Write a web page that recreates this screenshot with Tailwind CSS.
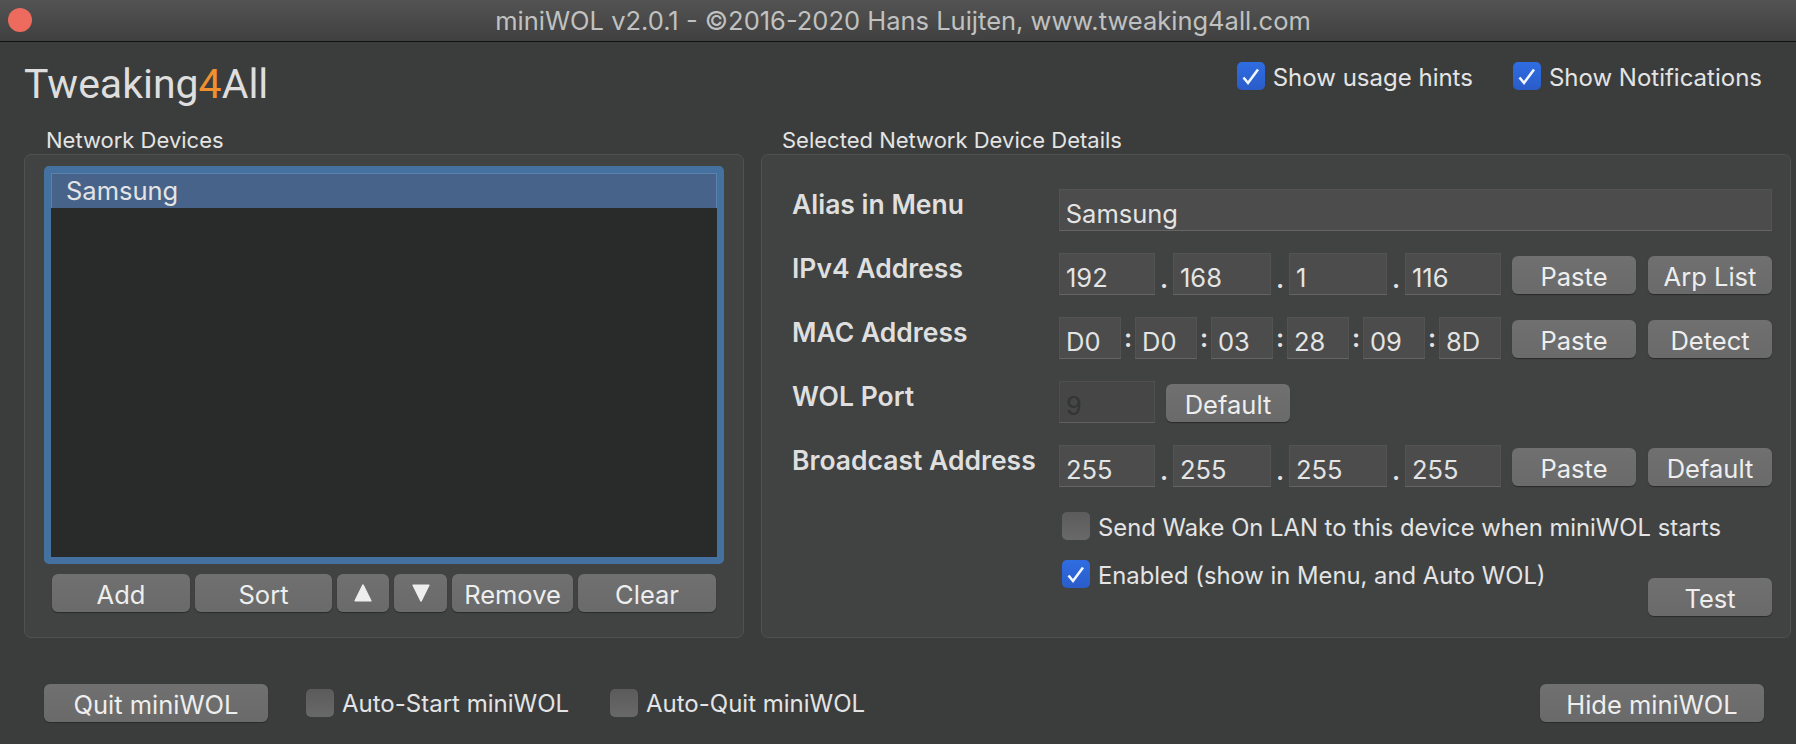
<!DOCTYPE html>
<html lang="en">
<head>
    <meta charset="UTF-8">
    <title>miniWOL</title>
    <script src="https://cdn.jsdelivr.net/npm/@tailwindcss/browser@4"></script>
</head>
<body class="w-[1796px] h-[744px] overflow-hidden bg-[#3b3d3c] text-[#e4e4e4] font-['Inter',sans-serif] text-[24px]">
    <!-- title bar -->
    <div class="relative h-[42px] flex items-center justify-center border-b border-[#111] bg-gradient-to-b from-[#525352] to-[#3f403f]">
        <div class="absolute left-[8px] top-[8px] w-[24px] h-[24px] rounded-full bg-[#ed6a5e]"></div>
        <span class="text-[#c0c1c0] text-[25.5px] leading-[40px] pl-[10px]">miniWOL v2.0.1 - ©2016-2020 Hans Luijten, www.tweaking4all.com</span>
    </div>

    <!-- logo and top options -->
    <div class="h-[80px] flex justify-between">
        <div class="pl-[24px] pt-[14px] font-['Roboto',sans-serif] font-normal text-[41px] leading-[56px] text-[#dedede]">Tweaking<span class="text-[#f0902e]">4</span>All</div>
        <div class="flex pt-[20px] pr-[34px] gap-[40px]">
            <label class="flex items-start gap-[8px] leading-[32px]">
                <span class="w-[28px] h-[28px] rounded-[5px] bg-gradient-to-b from-[#2f6de2] to-[#2a5cc9]">
                    <svg viewBox="0 0 28 28" class="w-[28px] h-[28px]"><path d="M6.5 15.5 L11 21 L21 7.5" fill="none" stroke="#f2f6ff" stroke-width="2.6"/></svg>
                </span>
                Show usage hints
            </label>
            <label class="flex items-start gap-[8px] leading-[32px]">
                <span class="w-[28px] h-[28px] rounded-[5px] bg-gradient-to-b from-[#2f6de2] to-[#2a5cc9]">
                    <svg viewBox="0 0 28 28" class="w-[28px] h-[28px]"><path d="M6.5 15.5 L11 21 L21 7.5" fill="none" stroke="#f2f6ff" stroke-width="2.6"/></svg>
                </span>
                Show Notifications
            </label>
        </div>
    </div>

    <!-- panels -->
    <div class="flex pl-[24px] pr-[5px] gap-[17px]">
        <div class="w-[720px]">
            <div class="pl-[22px] h-[32px] text-[22px] leading-[36px]">Network Devices</div>
            <div class="h-[484px] rounded-[7px] border border-[#505250] bg-[#414342] pt-[11px] pl-[19px]">
                <div class="w-[680px] h-[398px] rounded-[5px] border-[7px] border-[#44719f] bg-[#292b2a]">
                    <div class="h-[35px] bg-[#476389] border border-[#5a82ad] border-b-0 pl-[14px] text-[25.5px] leading-[33px]">Samsung</div>
                </div>
                <div class="flex gap-[5px] mt-[10px] ml-[8px] text-[25.5px]">
                    <button class="w-[138px] h-[38px] pt-[4px] leading-[30px] rounded-[6px] bg-gradient-to-b from-[#6f706f] to-[#696a69] shadow-[0_1px_1px_#2a2b2a] text-[#eee]">Add</button>
                    <button class="w-[137px] h-[38px] pt-[4px] leading-[30px] rounded-[6px] bg-gradient-to-b from-[#6f706f] to-[#696a69] shadow-[0_1px_1px_#2a2b2a] text-[#eee]">Sort</button>
                    <button class="w-[52px] h-[38px] rounded-[6px] bg-gradient-to-b from-[#6f706f] to-[#696a69] shadow-[0_1px_1px_#2a2b2a] flex items-center justify-center">
                        <svg viewBox="0 0 18 18" class="w-[20px] h-[20px]"><polygon points="9,2 16,16 2,16" fill="#eee" stroke="#eee" stroke-width="1.5" stroke-linejoin="round"/></svg>
                    </button>
                    <button class="w-[53px] h-[38px] rounded-[6px] bg-gradient-to-b from-[#6f706f] to-[#696a69] shadow-[0_1px_1px_#2a2b2a] flex items-center justify-center">
                        <svg viewBox="0 0 18 18" class="w-[20px] h-[20px]"><polygon points="2,2 16,2 9,16" fill="#eee" stroke="#eee" stroke-width="1.5" stroke-linejoin="round"/></svg>
                    </button>
                    <button class="w-[121px] h-[38px] pt-[4px] leading-[30px] rounded-[6px] bg-gradient-to-b from-[#6f706f] to-[#696a69] shadow-[0_1px_1px_#2a2b2a] text-[#eee]">Remove</button>
                    <button class="w-[138px] h-[38px] pt-[4px] leading-[30px] rounded-[6px] bg-gradient-to-b from-[#6f706f] to-[#696a69] shadow-[0_1px_1px_#2a2b2a] text-[#eee]">Clear</button>
                </div>
            </div>
        </div>

        <div class="w-[1030px]">
            <div class="pl-[21px] h-[32px] text-[22px] leading-[36px]">Selected Network Device Details</div>
            <div class="h-[484px] rounded-[7px] border border-[#505250] bg-[#414342] pt-[34px] pl-[31px] pr-[18px] flex flex-col gap-[22px] text-[25.5px]">
                <div class="flex">
                    <div class="w-[266px] font-semibold text-[26.5px] text-[#dfdfdf] leading-[30px] -ml-[1px] mr-[1px]">Alias in Menu</div>
                    <div class="w-[714px] h-[42px] bg-[#4b4c4b] border border-[#525352] border-b-[#646564] pl-[6px] pt-[7px] leading-[33px]">Samsung</div>
                </div>

                <div class="flex">
                    <div class="w-[266px] font-semibold text-[26.5px] text-[#dfdfdf] leading-[30px] -ml-[1px] mr-[1px]">IPv4 Address</div>
                    <div class="w-[96px] h-[42px] bg-[#4b4c4b] border border-[#525352] border-b-[#646564] pl-[6px] pt-[7px] leading-[33px]">192</div>
                    <div class="w-[18px] h-[42px] text-center font-semibold pt-[10px] leading-[32px]">.</div>
                    <div class="w-[98px] h-[42px] bg-[#4b4c4b] border border-[#525352] border-b-[#646564] pl-[6px] pt-[7px] leading-[33px]">168</div>
                    <div class="w-[18px] h-[42px] text-center font-semibold pt-[10px] leading-[32px]">.</div>
                    <div class="w-[98px] h-[42px] bg-[#4b4c4b] border border-[#525352] border-b-[#646564] pl-[6px] pt-[7px] leading-[33px]">1</div>
                    <div class="w-[18px] h-[42px] text-center font-semibold pt-[10px] leading-[32px]">.</div>
                    <div class="w-[96px] h-[42px] bg-[#4b4c4b] border border-[#525352] border-b-[#646564] pl-[6px] pt-[7px] leading-[33px]">116</div>
                    <button class="w-[124px] h-[38px] mt-[3px] ml-[11px] pt-[3px] leading-[30px] rounded-[6px] bg-gradient-to-b from-[#6f706f] to-[#696a69] shadow-[0_1px_1px_#2a2b2a] text-[#eee]">Paste</button>
                    <button class="w-[124px] h-[38px] mt-[3px] ml-[12px] pt-[3px] leading-[30px] rounded-[6px] bg-gradient-to-b from-[#6f706f] to-[#696a69] shadow-[0_1px_1px_#2a2b2a] text-[#eee]">Arp List</button>
                </div>

                <div class="flex">
                    <div class="w-[266px] font-semibold text-[26.5px] text-[#dfdfdf] leading-[30px] -ml-[1px] mr-[1px]">MAC Address</div>
                    <div class="w-[62px] h-[42px] bg-[#4b4c4b] border border-[#525352] border-b-[#646564] pl-[6px] pt-[7px] leading-[33px]">D0</div>
                    <div class="w-[14px] h-[42px] text-center font-semibold pt-[3px] leading-[36px]">:</div>
                    <div class="w-[62px] h-[42px] bg-[#4b4c4b] border border-[#525352] border-b-[#646564] pl-[6px] pt-[7px] leading-[33px]">D0</div>
                    <div class="w-[14px] h-[42px] text-center font-semibold pt-[3px] leading-[36px]">:</div>
                    <div class="w-[62px] h-[42px] bg-[#4b4c4b] border border-[#525352] border-b-[#646564] pl-[6px] pt-[7px] leading-[33px]">03</div>
                    <div class="w-[14px] h-[42px] text-center font-semibold pt-[3px] leading-[36px]">:</div>
                    <div class="w-[62px] h-[42px] bg-[#4b4c4b] border border-[#525352] border-b-[#646564] pl-[6px] pt-[7px] leading-[33px]">28</div>
                    <div class="w-[14px] h-[42px] text-center font-semibold pt-[3px] leading-[36px]">:</div>
                    <div class="w-[62px] h-[42px] bg-[#4b4c4b] border border-[#525352] border-b-[#646564] pl-[6px] pt-[7px] leading-[33px]">09</div>
                    <div class="w-[14px] h-[42px] text-center font-semibold pt-[3px] leading-[36px]">:</div>
                    <div class="w-[62px] h-[42px] bg-[#4b4c4b] border border-[#525352] border-b-[#646564] pl-[6px] pt-[7px] leading-[33px]">8D</div>
                    <button class="w-[124px] h-[38px] mt-[3px] ml-[11px] pt-[3px] leading-[30px] rounded-[6px] bg-gradient-to-b from-[#6f706f] to-[#696a69] shadow-[0_1px_1px_#2a2b2a] text-[#eee]">Paste</button>
                    <button class="w-[124px] h-[38px] mt-[3px] ml-[12px] pt-[3px] leading-[30px] rounded-[6px] bg-gradient-to-b from-[#6f706f] to-[#696a69] shadow-[0_1px_1px_#2a2b2a] text-[#eee]">Detect</button>
                </div>

                <div class="flex">
                    <div class="w-[266px] font-semibold text-[26.5px] text-[#dfdfdf] leading-[30px] -ml-[1px] mr-[1px]">WOL Port</div>
                    <div class="w-[96px] h-[42px] bg-[#454645] border border-[#4d4e4d] border-b-[#5f605f] pl-[6px] pt-[7px] leading-[33px] text-[#333433]">9</div>
                    <button class="w-[124px] h-[38px] mt-[3px] ml-[11px] pt-[3px] leading-[30px] rounded-[6px] bg-gradient-to-b from-[#6f706f] to-[#696a69] shadow-[0_1px_1px_#2a2b2a] text-[#eee]">Default</button>
                </div>

                <div class="flex">
                    <div class="w-[266px] font-semibold text-[26.5px] text-[#dfdfdf] leading-[30px] -ml-[1px] mr-[1px]">Broadcast Address</div>
                    <div class="w-[96px] h-[42px] bg-[#4b4c4b] border border-[#525352] border-b-[#646564] pl-[6px] pt-[7px] leading-[33px]">255</div>
                    <div class="w-[18px] h-[42px] text-center font-semibold pt-[10px] leading-[32px]">.</div>
                    <div class="w-[98px] h-[42px] bg-[#4b4c4b] border border-[#525352] border-b-[#646564] pl-[6px] pt-[7px] leading-[33px]">255</div>
                    <div class="w-[18px] h-[42px] text-center font-semibold pt-[10px] leading-[32px]">.</div>
                    <div class="w-[98px] h-[42px] bg-[#4b4c4b] border border-[#525352] border-b-[#646564] pl-[6px] pt-[7px] leading-[33px]">255</div>
                    <div class="w-[18px] h-[42px] text-center font-semibold pt-[10px] leading-[32px]">.</div>
                    <div class="w-[96px] h-[42px] bg-[#4b4c4b] border border-[#525352] border-b-[#646564] pl-[6px] pt-[7px] leading-[33px]">255</div>
                    <button class="w-[124px] h-[38px] mt-[3px] ml-[11px] pt-[3px] leading-[30px] rounded-[6px] bg-gradient-to-b from-[#6f706f] to-[#696a69] shadow-[0_1px_1px_#2a2b2a] text-[#eee]">Paste</button>
                    <button class="w-[124px] h-[38px] mt-[3px] ml-[12px] pt-[3px] leading-[30px] rounded-[6px] bg-gradient-to-b from-[#6f706f] to-[#696a69] shadow-[0_1px_1px_#2a2b2a] text-[#eee]">Default</button>
                </div>

                <div class="pl-[269px] mt-[3px] text-[23.8px]">
                    <div class="flex flex-col gap-[16px]">
                        <label class="flex items-start gap-[8px] leading-[32px] whitespace-nowrap">
                            <span class="w-[28px] h-[28px] rounded-[5px] bg-gradient-to-b from-[#5a5b5a] to-[#686968]"></span>
                            Send Wake On LAN to this device when miniWOL starts
                        </label>
                        <div class="flex justify-between">
                            <label class="flex items-start gap-[8px] leading-[32px] whitespace-nowrap">
                                <span class="w-[28px] h-[28px] rounded-[5px] bg-gradient-to-b from-[#2f6de2] to-[#2a5cc9]">
                                    <svg viewBox="0 0 28 28" class="w-[28px] h-[28px]"><path d="M6.5 15.5 L11 21 L21 7.5" fill="none" stroke="#f2f6ff" stroke-width="2.6"/></svg>
                                </span>
                                Enabled (show in Menu, and Auto WOL)
                            </label>
                            <button class="w-[124px] h-[38px] mt-[18px] pt-[4px] leading-[30px] rounded-[6px] bg-gradient-to-b from-[#6f706f] to-[#696a69] shadow-[0_1px_1px_#2a2b2a] text-[#eee] text-[25.5px]">Test</button>
                        </div>
                    </div>
                </div>
            </div>
        </div>
    </div>

    <!-- bottom bar -->
    <div class="flex items-center pl-[44px] pr-[32px] mt-[46px]">
        <button class="w-[224px] h-[38px] pt-[4px] leading-[30px] rounded-[6px] bg-gradient-to-b from-[#6f706f] to-[#696a69] shadow-[0_1px_1px_#2a2b2a] text-[#eee] text-[25.5px]">Quit miniWOL</button>
        <label class="flex items-center gap-[8px] ml-[38px] w-[304px]">
            <span class="w-[28px] h-[28px] rounded-[5px] bg-gradient-to-b from-[#5a5b5a] to-[#686968]"></span>
            <span class="pt-[2px] leading-[30px]">Auto-Start miniWOL</span>
        </label>
        <label class="flex items-center gap-[8px]">
            <span class="w-[28px] h-[28px] rounded-[5px] bg-gradient-to-b from-[#5a5b5a] to-[#686968]"></span>
            <span class="pt-[2px] leading-[30px]">Auto-Quit miniWOL</span>
        </label>
        <button class="w-[224px] h-[38px] ml-auto pt-[4px] leading-[30px] rounded-[6px] bg-gradient-to-b from-[#6f706f] to-[#696a69] shadow-[0_1px_1px_#2a2b2a] text-[#eee] text-[25.5px]">Hide miniWOL</button>
    </div>
</body>
</html>
